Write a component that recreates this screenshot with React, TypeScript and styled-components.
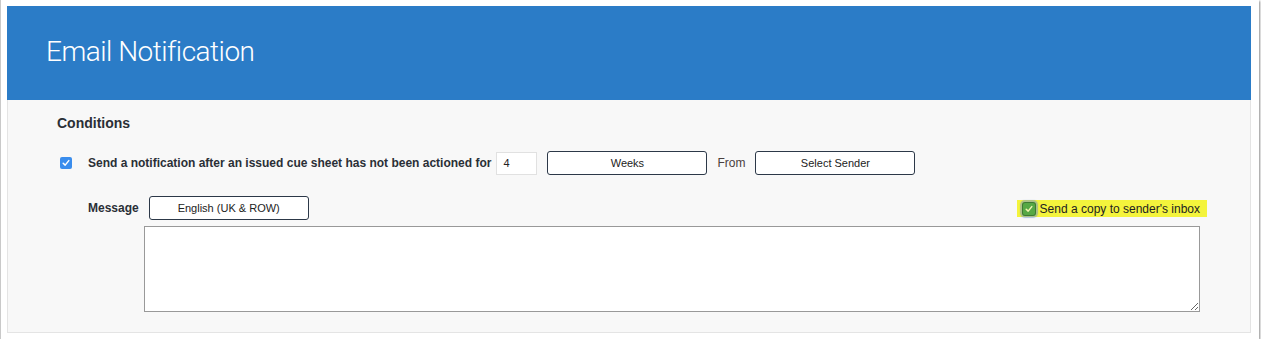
import React from 'react';
import styled, { createGlobalStyle } from 'styled-components';

const GlobalStyle = createGlobalStyle`
  html, body {
    margin: 0;
    padding: 0;
    background: #ffffff;
  }
  body {
    font-family: "Liberation Sans", Arial, sans-serif;
    color: #2b2b2b;
  }
`;

const Frame = styled.div`
  box-sizing: border-box;
  width: 1259px;
  height: 339px;
  padding: 6px 6px 0 6px;
  border-left: 1px solid #c9c9c9;
  background: #fff;
  box-shadow: 1px 1px 2px rgba(0, 0, 0, 0.45);
`;

const Card = styled.section`
  width: 1244px;
  display: flex;
  flex-direction: column;
`;

const Header = styled.header`
  height: 94px;
  background: #2b7cc7;
  display: flex;
  align-items: center;
  padding-left: 39px;
  box-sizing: border-box;
`;

const Title = styled.h1`
  margin: 0 0 3px;
  font-family: Roboto, "Liberation Sans", sans-serif;
  font-weight: 300;
  font-size: 28px;
  letter-spacing: -0.5px;
  color: #ffffff;
`;

const Body = styled.div`
  box-sizing: border-box;
  height: 233px;
  background: #f8f8f8;
  border: 1px solid #e4e4e4;
  border-top: none;
  padding: 13px 0 0 48px;
`;

const Heading = styled.h2`
  margin: 0 0 0 1px;
  font-size: 14px;
  font-weight: bold;
  line-height: 20px;
  color: #2a2f36;
`;

const ConditionRow = styled.div`
  display: flex;
  align-items: center;
  height: 24px;
  margin: 18px 0 0 4px;
`;

const Check = styled.span<{ $tone: 'blue' | 'green' }>`
  display: inline-flex;
  align-items: center;
  justify-content: center;
  box-sizing: border-box;
  width: 12px;
  height: 12px;
  border-radius: 2px;
  flex-shrink: 0;
  background: ${(p) => (p.$tone === 'blue' ? '#3a8ded' : '#56a845')};
  box-shadow: ${(p) =>
    p.$tone === 'green' ? '0 0 0 1px #3d7a32, 0 0 1px 3px rgba(110, 150, 200, 0.55)' : 'none'};
  svg {
    width: 8px;
    height: 8px;
  }
`;

const RowText = styled.span`
  margin-left: 16px;
  font-size: 12px;
  font-weight: bold;
  color: #2a2f36;
  white-space: nowrap;
`;

const NumberInput = styled.input`
  box-sizing: border-box;
  width: 41px;
  height: 23px;
  margin-left: 5px;
  padding: 0 6px;
  border: 1px solid #e1e1e1;
  background: #fff;
  font-family: "Liberation Sans", Arial, sans-serif;
  font-size: 11px;
  color: #222;
  outline: none;
`;

const SelectButton = styled.button<{ $gap?: number }>`
  box-sizing: border-box;
  width: 160px;
  height: 24px;
  margin-left: ${(p) => p.$gap ?? 10}px;
  border: 1px solid #2c3848;
  border-radius: 3px;
  background: #fff;
  font-family: "Liberation Sans", Arial, sans-serif;
  font-size: 11px;
  color: #222;
  padding: 0;
`;

const PlainLabel = styled.span`
  margin-left: 10px;
  font-size: 12px;
  color: #4a4040;
`;

const MessageBlock = styled.div`
  margin: 21px 0 0 32px;
  width: 1119px;
`;

const MessageRow = styled.div`
  display: flex;
  align-items: center;
  justify-content: space-between;
  height: 24px;
`;

const MessageLeft = styled.div`
  display: flex;
  align-items: center;
`;

const BoldLabel = styled.span`
  font-size: 12px;
  font-weight: bold;
  color: #2a2f36;
`;

const Highlight = styled.label`
  display: flex;
  align-items: center;
  gap: 5px;
  height: 17px;
  padding: 0 7px 0 6px;
  margin-top: 1px;
  background: #f4f43c;
  font-size: 12px;
  color: #222;
`;

const TextArea = styled.textarea`
  display: block;
  box-sizing: border-box;
  width: 1056px;
  height: 86px;
  margin: 6px 0 0 56px;
  border: 1px solid #999;
  border-radius: 0;
  background: #fff;
  outline: none;
`;

const Tick = ({ color }: { color: string }) => (
  <svg viewBox="0 0 8 8">
    <path d="M1.2 4.2 L3.2 6.1 L6.8 1.6" fill="none" stroke={color} strokeWidth="1.5" strokeLinecap="round" strokeLinejoin="round" />
  </svg>
);

export default function App() {
  return (
    <>
      <GlobalStyle />
      <Frame>
        <Card>
          <Header>
            <Title>Email Notification</Title>
          </Header>
          <Body>
            <Heading>Conditions</Heading>
            <ConditionRow>
              <Check $tone="blue">
                <Tick color="#ffffff" />
              </Check>
              <RowText>Send a notification after an issued cue sheet has not been actioned for</RowText>
              <NumberInput defaultValue="4" />
              <SelectButton>Weeks</SelectButton>
              <PlainLabel>From</PlainLabel>
              <SelectButton>Select Sender</SelectButton>
            </ConditionRow>
            <MessageBlock>
              <MessageRow>
                <MessageLeft>
                  <BoldLabel>Message</BoldLabel>
                  <SelectButton>English (UK &amp; ROW)</SelectButton>
                </MessageLeft>
                <Highlight>
                  <Check $tone="green">
                    <Tick color="#f4f4b0" />
                  </Check>
                  Send a copy to sender's inbox
                </Highlight>
              </MessageRow>
              <TextArea />
            </MessageBlock>
          </Body>
        </Card>
      </Frame>
    </>
  );
}
